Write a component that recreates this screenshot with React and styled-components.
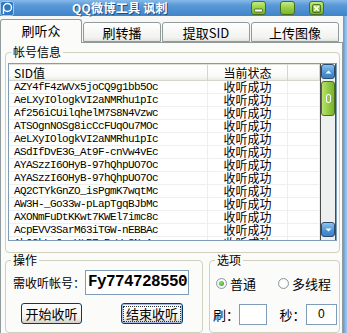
import React from 'react'
import styled, { createGlobalStyle } from 'styled-components'

const GlobalStyle = createGlobalStyle`
  html, body { margin: 0; padding: 0; background: #fff; }
  body {
    font-family: "Noto Sans CJK SC", "Noto Sans", sans-serif;
    font-size: 12px;
    color: #000;
  }
`

const sids = [
  'AZY4fF4zWVx5joCQ9g1bb5Oc',
  'AeLXyIOlogkVI2aNMRhu1pIc',
  'Af256iCUilqhelM7S8N4Vzwc',
  'ATSOgnNOSg8icCcFUqOu7MOc',
  'AeLXyIOlogkVI2aNMRhu1pIc',
  'ASdIfDvE3G_At9F-cnVw4vEc',
  'AYASzzI6OHyB-97hQhpUO7Oc',
  'AYASzzI6OHyB-97hQhpUO7Oc',
  'AQ2CTYkGnZO_isPgmK7wqtMc',
  'AW3H-_Go33w-pLapTgqBJbMc',
  'AXONmFuDtKKwt7KWEl7imc8c',
  'AcpEVV3SarM63iTGW-nEBBAc',
  'AbQ2kLm0-xYtR7sPqWv3NnAc',
]

const tabs = [
  { name: '刷听众', width: 82 },
  { name: '刷转播', width: 78 },
  { name: '提取SID', width: 88 },
  { name: '上传图像', width: 88 },
]

const Window = styled.div`
  width: 347px;
  height: 333px;
  overflow: hidden;
  display: flex;
  flex-direction: column;
  background: #f7f7f5;
`

const TitleBar = styled.div`
  height: 16px;
  flex: none;
  display: flex;
  align-items: center;
  background: linear-gradient(#86b9e8 0%, #5898d6 35%, #3f84c9 100%);
`

const TitleIcon = styled.svg`
  width: 14px;
  height: 15px;
  flex: none;
`

const TitleText = styled.div`
  margin-left: 58px;
  flex: 1;
  color: #fff;
  font-weight: bold;
  font-size: 12px;
  line-height: 16px;
  letter-spacing: 0.3px;
  text-shadow: 1px 1px 0 #1d4f86;
`

const TitleButtons = styled.div`
  display: flex;
  gap: 14px;
  margin-right: 23px;
`

const TitleButton = styled.div`
  width: 13px;
  height: 12px;
  border: 1px solid #466d1d;
  border-radius: 3px;
  background: linear-gradient(#c4ec7e, #93cc45 55%, #7ab52f);
  display: flex;
  align-items: center;
  justify-content: center;
`

const Body = styled.div`
  flex: 1;
  display: flex;
  min-height: 0;
`

const Main = styled.div`
  flex: 1;
  display: flex;
  flex-direction: column;
  padding-top: 3px;
  min-width: 0;
`

const Frame = styled.div`
  width: 4px;
  flex: none;
  background: linear-gradient(to right, #5d9ad6, #a6cbef);
`

const TabStrip = styled.div`
  display: flex;
  align-items: flex-end;
  gap: 1px;
  height: 23px;
  flex: none;
`

const Tab = styled.div`
  width: ${(p) => p.width}px;
  height: ${(p) => (p.active ? 24 : 20)}px;
  margin-bottom: ${(p) => (p.active ? -1 : 0)}px;
  position: relative;
  z-index: ${(p) => (p.active ? 1 : 0)};
  box-sizing: border-box;
  border: 1px solid #919b9c;
  border-bottom: ${(p) => (p.active ? 'none' : '1px solid #919b9c')};
  border-radius: 3px 3px 0 0;
  background: ${(p) => (p.active ? '#fbfbfa' : 'linear-gradient(#ffffff, #f2f2ef 80%, #e4e4de)')};
  display: flex;
  align-items: center;
  justify-content: center;
  font-size: 13px;
  padding-bottom: ${(p) => (p.active ? 3 : 0)}px;
`

const Panel = styled.div`
  flex: 1;
  border: 1px solid #919b9c;
  border-bottom: none;
  background: #fbfbfa;
  padding: 2px 2px 0 4px;
  display: flex;
  flex-direction: column;
  min-height: 0;
`

const Group = styled.fieldset`
  margin: 0;
  border: 1px solid #d0d0bf;
  border-radius: 4px;
  padding: 0 2px ${(p) => p.padBottom || 4}px 2px;
  min-width: 0;
  box-sizing: border-box;
  width: ${(p) => (p.width ? `${p.width}px` : 'auto')};
  flex: ${(p) => (p.width ? 'none' : '1')};
`

const Legend = styled.legend`
  margin-left: 3px;
  padding: 0 2px;
  font-size: 12px;
  line-height: 14px;
`

const ListView = styled.div`
  margin-top: 4px;
  height: 178px;
  box-sizing: border-box;
  border: 1px solid #7f9db9;
  background: #fff;
  display: flex;
`

const Table = styled.div`
  flex: 1;
  overflow: hidden;
  min-width: 0;
`

const Columns = styled.div`
  display: grid;
  grid-template-columns: 199px 80px 1fr;
`

const HeaderCell = styled.div`
  height: 15px;
  border-top: 1px solid #e2e2da;
  border-bottom: 1px solid #d5d5cc;
  border-right: 1px solid #d5d5cc;
  background: linear-gradient(#ffffff, #fafaf8 70%, #ecece6);
  line-height: 15px;
  padding-left: ${(p) => (p.center ? 0 : 5)}px;
  text-align: ${(p) => (p.center ? 'center' : 'left')};
  font-size: 12px;
`

const Cell = styled.div`
  height: 12px;
  border-bottom: 1px solid #efefef;
  border-right: 1px solid #efefef;
  line-height: 12px;
  white-space: nowrap;
  padding-left: ${(p) => (p.center ? 0 : 5)}px;
  text-align: ${(p) => (p.center ? 'center' : 'left')};
  font-family: ${(p) => (p.mono ? '"Liberation Mono", monospace' : 'inherit')};
  font-size: ${(p) => (p.mono ? '11px' : '12px')};
  letter-spacing: ${(p) => (p.mono ? '-0.6px' : '0')};
`

const ScrollBar = styled.div`
  width: 16px;
  flex: none;
  display: flex;
  flex-direction: column;
  background: #eef0f0;
  border-left: 1px solid #4a4a4a;
  border-right: 1px solid #4a4a4a;
  box-sizing: border-box;
`

const ArrowButton = styled.div`
  height: 15px;
  flex: none;
  border-radius: 3px;
  background: linear-gradient(#8cc3ee, #4b93d6 60%, #3a7fc3);
  border: 1px solid #2d4c6c;
  box-sizing: border-box;
  display: flex;
  align-items: center;
  justify-content: center;
  margin-top: ${(p) => (p.down ? 'auto' : '0')};
  margin-bottom: ${(p) => (p.down ? '3px' : '0')};
`

const Thumb = styled.div`
  height: 35px;
  margin-top: 2px;
  border-radius: 3px;
  border: 1px solid #4d6c24;
  background: linear-gradient(to right, #b9e36e, #93cd44 50%, #77b22c);
  box-sizing: border-box;
  display: flex;
  align-items: center;
  justify-content: center;
`

const Grip = styled.div`
  width: 3px;
  height: 7px;
  border: 1px solid #fff;
  border-radius: 2px;
`

const BottomRow = styled.div`
  display: flex;
  gap: 6px;
`

const FieldRow = styled.div`
  display: flex;
  align-items: center;
  margin-top: ${(p) => p.top || 0}px;
  padding-left: ${(p) => p.left || 0}px;
  gap: ${(p) => p.gap || 0}px;
`

const Label = styled.span`
  font-size: ${(p) => p.size || 12}px;
  white-space: nowrap;
  margin-left: ${(p) => p.left || 0}px;
`

const BigInput = styled.div`
  width: 104px;
  height: 25px;
  box-sizing: border-box;
  border: 1px solid #7f9db9;
  background: #fff;
  padding-left: 2px;
  font-family: "Liberation Mono", monospace;
  font-weight: bold;
  font-size: 16px;
  letter-spacing: -0.6px;
  line-height: 23px;
  white-space: nowrap;
`

const SmallInput = styled.div`
  width: ${(p) => p.width}px;
  height: 21px;
  box-sizing: border-box;
  border: 1px solid #7f9db9;
  background: #fff;
  text-align: center;
  line-height: 19px;
  font-family: "Liberation Sans", Arial, sans-serif;
  font-size: 12px;
`

const Button = styled.div`
  width: ${(p) => p.width}px;
  height: 21px;
  box-sizing: border-box;
  border: 1px solid #003c74;
  border-radius: 3px;
  background: linear-gradient(#ffffff, #f3f3ef 70%, #d6d0c5);
  box-shadow: ${(p) => (p.focused ? 'inset 0 0 0 1px #a8bce0' : 'none')};
  display: flex;
  align-items: center;
  justify-content: center;
  font-size: 13px;
`

const FocusRing = styled.span`
  border: 1px dotted #333;
  padding: 0 2px;
  line-height: 14px;
`

const Radio = styled.span`
  width: 11px;
  height: 11px;
  box-sizing: border-box;
  border-radius: 50%;
  border: 1px solid #8a9aa8;
  background: radial-gradient(circle, #fff 40%, #e4e4dc);
  display: inline-flex;
  align-items: center;
  justify-content: center;
  margin-right: 3px;
  flex: none;
`

const Dot = styled.span`
  width: 5px;
  height: 5px;
  border-radius: 50%;
  background: radial-gradient(circle at 40% 40%, #8fe06a, #2e9a20);
`

const RadioItem = styled.label`
  display: flex;
  align-items: center;
  font-size: 13px;
  margin-left: ${(p) => p.left || 0}px;
`

export default function App() {
  return (
    <>
      <GlobalStyle />
      <Window>
        <TitleBar>
          <TitleIcon viewBox="0 0 14 15">
            <rect x="0.5" y="0.5" width="13" height="14" rx="2" fill="#2f78c2" stroke="#9ccaf3" />
            <circle cx="7.5" cy="6.5" r="4" fill="none" stroke="#fff" strokeWidth="1.4" />
            <path d="M3.5 7 L3.5 13" stroke="#fff" strokeWidth="1.4" />
          </TitleIcon>
          <TitleText>QQ微博工具 讽刺</TitleText>
          <TitleButtons>
            <TitleButton>
              <svg width="9" height="9" viewBox="0 0 9 9">
                <rect x="0.5" y="5" width="8" height="3" rx="1" fill="#fff" stroke="#3d5d18" strokeWidth="0.8" />
              </svg>
            </TitleButton>
            <TitleButton />
            <TitleButton>
              <svg width="9" height="9" viewBox="0 0 9 9">
                <rect x="0.5" y="0.5" width="8" height="8" rx="1.5" fill="none" stroke="#3d5d18" strokeWidth="0.8" />
                <path d="M2.3 2.3 L6.7 6.7 M6.7 2.3 L2.3 6.7" stroke="#fff" strokeWidth="1.6" />
              </svg>
            </TitleButton>
          </TitleButtons>
        </TitleBar>
        <Body>
          <Main>
            <TabStrip>
              {tabs.map((t, i) => (
                <Tab key={t.name} width={t.width} active={i === 0}>{t.name}</Tab>
              ))}
            </TabStrip>
            <Panel>
              <Group>
                <Legend>帐号信息</Legend>
                <ListView>
                  <Table>
                    <Columns>
                      <HeaderCell>SID值</HeaderCell>
                      <HeaderCell center>当前状态</HeaderCell>
                      <HeaderCell />
                      {sids.map((sid, i) => (
                        <React.Fragment key={i}>
                          <Cell mono>{sid}</Cell>
                          <Cell center>收听成功</Cell>
                          <Cell />
                        </React.Fragment>
                      ))}
                    </Columns>
                  </Table>
                  <ScrollBar>
                    <ArrowButton>
                      <svg width="7" height="4" viewBox="0 0 7 4">
                        <path d="M0.5 3.5 L3.5 0.5 L6.5 3.5 Z" fill="#fff" />
                      </svg>
                    </ArrowButton>
                    <Thumb>
                      <Grip />
                    </Thumb>
                    <ArrowButton down>
                      <svg width="7" height="4" viewBox="0 0 7 4">
                        <path d="M0.5 0.5 L3.5 3.5 L6.5 0.5 Z" fill="#fff" />
                      </svg>
                    </ArrowButton>
                  </ScrollBar>
                </ListView>
              </Group>
              <BottomRow>
                <Group width={198} padBottom={7}>
                  <Legend>操作</Legend>
                  <FieldRow top={3} left={5}>
                    <Label size={12}>需收听帐号：</Label>
                    <BigInput>Fy774728550</BigInput>
                  </FieldRow>
                  <FieldRow top={8} left={13} gap={39}>
                    <Button width={61}>开始收听</Button>
                    <Button width={62} focused><FocusRing>结束收听</FocusRing></Button>
                  </FieldRow>
                </Group>
                <Group width={131} padBottom={7}>
                  <Legend>选项</Legend>
                  <FieldRow top={7} left={4}>
                    <RadioItem>
                      <Radio><Dot /></Radio>
                      普通
                    </RadioItem>
                    <RadioItem left={22}>
                      <Radio />
                      多线程
                    </RadioItem>
                  </FieldRow>
                  <FieldRow top={11} left={1}>
                    <Label size={13}>刷：</Label>
                    <SmallInput width={29} />
                    <Label size={13} left={13}>秒：</Label>
                    <SmallInput width={33}>0</SmallInput>
                  </FieldRow>
                </Group>
              </BottomRow>
            </Panel>
          </Main>
          <Frame />
        </Body>
      </Window>
    </>
  )
}
